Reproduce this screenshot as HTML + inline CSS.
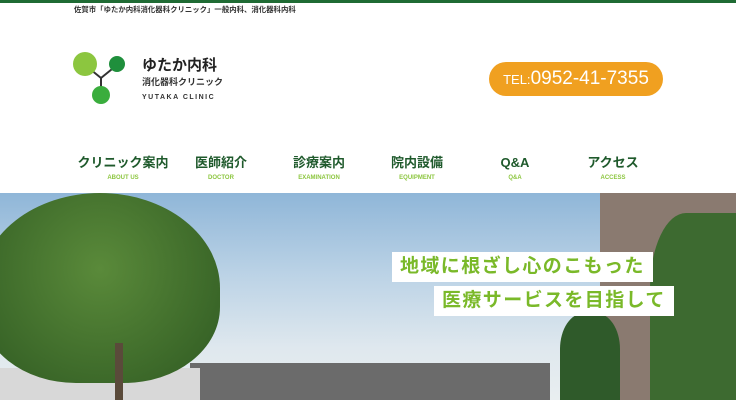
<!DOCTYPE html>
<html><head><meta charset="utf-8"><style>
*{margin:0;padding:0;box-sizing:border-box}
body{width:736px;height:400px;overflow:hidden;background:#fff;font-family:"Liberation Sans","Noto Sans CJK JP",sans-serif;position:relative}
.top{position:absolute;left:0;top:0;width:736px;height:3px;background:#1f6b34}
.tag{position:absolute;left:74px;top:4px;font-size:7.4px;font-weight:bold;color:#333;white-space:nowrap}
.abs{position:absolute}
.tel{left:489px;top:62px;width:174px;height:34px;border-radius:17px;background:#f0a020;color:#fff;font-size:19px;line-height:34px;text-align:center}
.tel small{font-size:13px}
.nav{left:74px;top:154px;width:600px;display:flex}
.nav div{width:98px;text-align:center}
.nav b{display:block;font-size:13px;height:17px;line-height:17px;color:#1f5a2c}
.nav span{display:block;font-size:6px;height:8px;line-height:8px;color:#8cc63f;font-weight:bold;margin-top:3px}
.hero{left:0;top:193px;width:736px;height:207px;overflow:hidden;background:linear-gradient(#8fb6d8 0%,#bcd3e6 40%,#dfe8ee 75%,#e9eef0 100%)}
.cap{background:#fff;color:#7ab929;font-size:19px;font-weight:bold;padding:0 8px;height:30px;line-height:30px;letter-spacing:1.4px;white-space:nowrap}
</style></head><body>
<div class="top"></div>
<div class="tag">佐賀市「ゆたか内科消化器科クリニック」一般内科、消化器科内科</div>
<svg class="abs" style="left:72px;top:52px" width="56" height="54">
<line x1="13" y1="13" x2="29" y2="26" stroke="#333" stroke-width="2"/><line x1="45" y1="13" x2="29" y2="26" stroke="#333" stroke-width="2"/><line x1="29" y1="26" x2="29" y2="38" stroke="#333" stroke-width="2"/>
<circle cx="13" cy="12" r="12" fill="#8cc63f"/><circle cx="45" cy="12" r="8" fill="#1f8f3c"/><circle cx="29" cy="43" r="9" fill="#3aad3d"/></svg>
<div class="abs" style="left:142px;top:54px;font-size:15px;font-weight:bold;color:#222">ゆたか内科</div>
<div class="abs" style="left:142px;top:75px;font-size:9px;font-weight:bold;color:#333">消化器科クリニック</div>
<div class="abs" style="left:142px;top:94px;font-size:7px;font-weight:bold;color:#333;letter-spacing:1.5px">YUTAKA CLINIC</div>
<div class="abs tel"><small>TEL:</small>0952-41-7355</div>
<div class="abs nav">
<div><b>クリニック案内</b><span>ABOUT US</span></div>
<div><b>医師紹介</b><span>DOCTOR</span></div>
<div><b>診療案内</b><span>EXAMINATION</span></div>
<div><b>院内設備</b><span>EQUIPMENT</span></div>
<div><b>Q&amp;A</b><span>Q&amp;A</span></div>
<div><b>アクセス</b><span>ACCESS</span></div>
</div>
<div class="abs hero">
<div class="abs" style="left:190px;top:170px;width:360px;height:40px;background:#6b6b6b"></div>
<div class="abs" style="left:0;top:175px;width:200px;height:40px;background:#d8d8d8"></div>
<div class="abs" style="left:-20px;top:0;width:240px;height:190px;border-radius:50% 50% 40% 40%;background:radial-gradient(circle at 50% 40%,#5a8a3a,#2f5a22)"></div>
<div class="abs" style="left:115px;top:150px;width:8px;height:60px;background:#5a4a3a"></div>
<div class="abs" style="left:600px;top:0;width:140px;height:207px;background:#8a7a70"></div>
<div class="abs" style="left:560px;top:120px;width:60px;height:90px;border-radius:40% 40% 0 0;background:#2f5a2a"></div>
<div class="abs" style="left:650px;top:20px;width:90px;height:190px;border-radius:40% 0 0 0;background:#3d6a30"></div>
<div class="abs cap" style="left:392px;top:59px">地域に根ざし心のこもった</div>
<div class="abs cap" style="left:434px;top:93px">医療サービスを目指して</div>
</div>
</body></html>
